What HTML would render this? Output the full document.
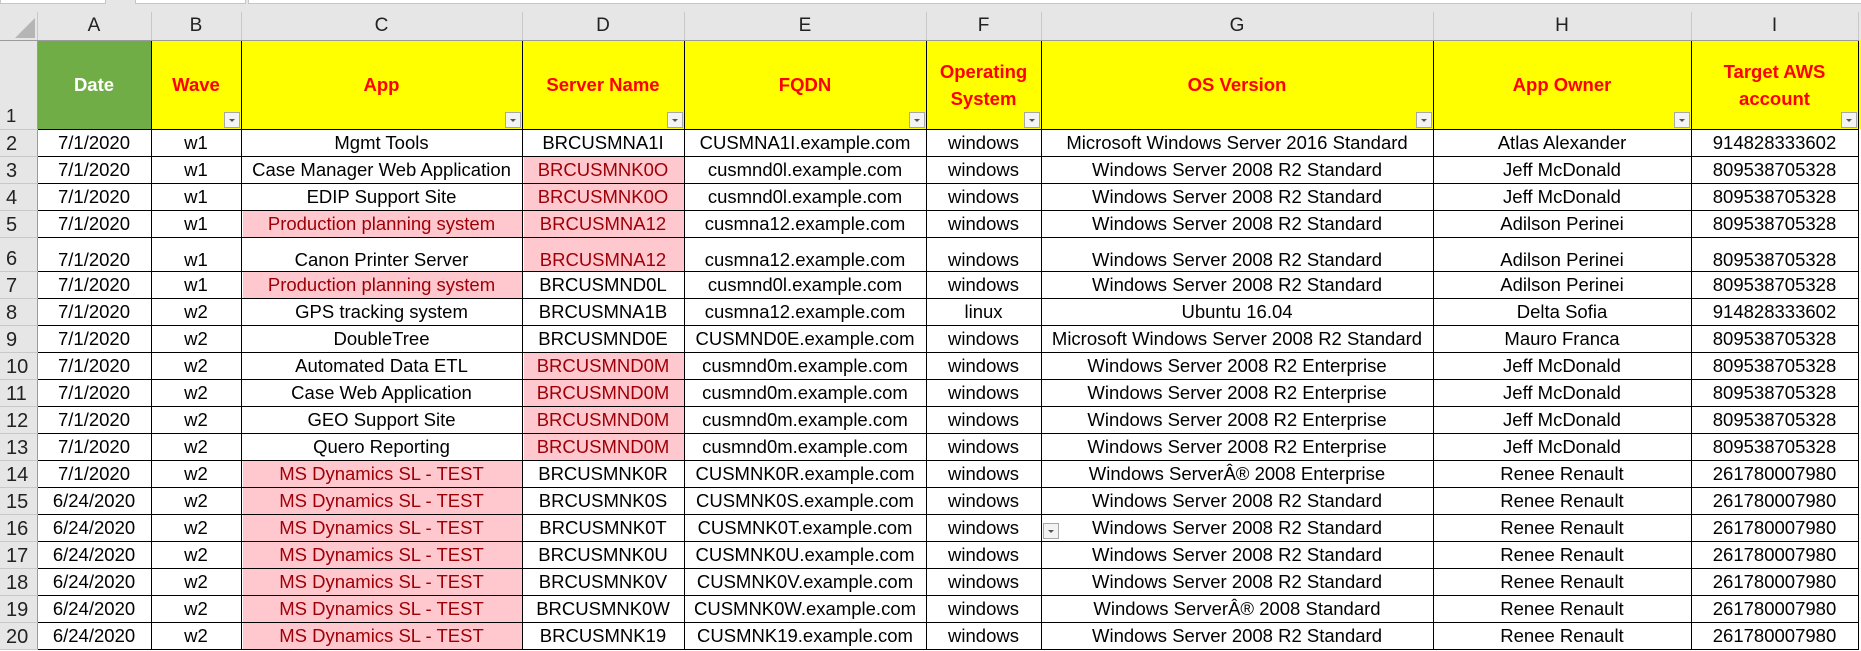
<!DOCTYPE html>
<html><head><meta charset="utf-8">
<style>
html,body{margin:0;padding:0;background:#fff;width:1861px;height:651px;overflow:hidden;font-family:"Liberation Sans",sans-serif;}
.top{position:absolute;left:0;top:0;width:1861px;height:12px;background:#e6e6e6;}
.top div{position:absolute;top:0;height:3px;background:#fff;border:1px solid #c6c6c6;border-top:none;}
table{position:absolute;left:0;top:12px;border-collapse:collapse;table-layout:fixed;font-size:18.5px;color:#000;}
td{padding:0;white-space:nowrap;overflow:hidden;text-align:center;border:1px solid #000;line-height:22px;position:relative;}
tr.ch td{background:#e6e6e6;border:none;border-right:1px solid #c8c8c8;border-bottom:1px solid #9b9b9b;color:#222;font-size:19px;vertical-align:bottom;padding-bottom:3px;}
td.rh{background:#e6e6e6;border:none;border-right:1px solid #9b9b9b;border-bottom:1px solid #c8c8c8;text-align:left;padding-left:6px;color:#222;font-size:20px;vertical-align:bottom;padding-bottom:1px;}
tr.h td{background:#ff0;color:#f00;font-weight:bold;font-size:18.5px;line-height:27px;}
tr.h td.g{background:#70ad47;color:#fff;}
tr.h td.rh{background:#e6e6e6;color:#222;font-weight:normal;padding-bottom:2px;line-height:22px;}
.p{background:#ffc7ce;color:#9c0006;box-shadow:inset 1px 0 #fff;}
.fb{position:absolute;right:1px;bottom:1px;width:14px;height:14px;background:#f3f3f3;border:1px solid #a8a8a8;}
.fb:after{content:"";position:absolute;left:4px;top:6px;border-left:3px solid transparent;border-right:3px solid transparent;border-top:3px solid #555;}
td.e{border:none;background:#fff;}
</style></head><body>
<div class="top"><div style="left:0;width:104px"></div><div style="left:135px;width:109px"></div><div style="left:248px;width:1613px"></div></div>
<table>
<colgroup><col style="width:37px"><col style="width:114px"><col style="width:90px"><col style="width:281px"><col style="width:162px"><col style="width:242px"><col style="width:115px"><col style="width:392px"><col style="width:258px"><col style="width:167px"><col style="width:3px"></colgroup>
<tr class="ch" style="height:28px"><td style="background:#e6e6e6;position:relative"><span style="position:absolute;right:2px;bottom:2px;width:0;height:0;border-left:20px solid transparent;border-bottom:20px solid #b5b5b5"></span></td><td>A</td><td>B</td><td>C</td><td>D</td><td>E</td><td>F</td><td>G</td><td>H</td><td>I</td><td style="border:none"></td></tr>
<tr class="h" style="height:89px"><td class="rh">1</td><td class="g">Date</td><td>Wave<span class="fb"></span></td><td>App<span class="fb"></span></td><td>Server Name<span class="fb"></span></td><td>FQDN<span class="fb"></span></td><td>Operating<br>System<span class="fb"></span></td><td>OS Version<span class="fb"></span></td><td>App Owner<span class="fb"></span></td><td>Target AWS<br>account<span class="fb"></span></td><td class="e"></td></tr>
<tr style="height:27px"><td class="rh">2</td><td>7/1/2020</td><td>w1</td><td>Mgmt Tools</td><td>BRCUSMNA1I</td><td>CUSMNA1I.example.com</td><td>windows</td><td>Microsoft Windows Server 2016 Standard</td><td>Atlas Alexander</td><td>914828333602</td><td class="e"></td></tr>
<tr style="height:27px"><td class="rh">3</td><td>7/1/2020</td><td>w1</td><td>Case Manager Web Application</td><td class="p">BRCUSMNK0O</td><td>cusmnd0l.example.com</td><td>windows</td><td>Windows Server 2008 R2 Standard</td><td>Jeff McDonald</td><td>809538705328</td><td class="e"></td></tr>
<tr style="height:27px"><td class="rh">4</td><td>7/1/2020</td><td>w1</td><td>EDIP Support Site</td><td class="p">BRCUSMNK0O</td><td>cusmnd0l.example.com</td><td>windows</td><td>Windows Server 2008 R2 Standard</td><td>Jeff McDonald</td><td>809538705328</td><td class="e"></td></tr>
<tr style="height:27px"><td class="rh">5</td><td>7/1/2020</td><td>w1</td><td class="p">Production planning system</td><td class="p">BRCUSMNA12</td><td>cusmna12.example.com</td><td>windows</td><td>Windows Server 2008 R2 Standard</td><td>Adilson Perinei</td><td>809538705328</td><td class="e"></td></tr>
<tr style="height:34px;vertical-align:bottom"><td class="rh">6</td><td>7/1/2020</td><td>w1</td><td>Canon Printer Server</td><td class="p">BRCUSMNA12</td><td>cusmna12.example.com</td><td>windows</td><td>Windows Server 2008 R2 Standard</td><td>Adilson Perinei</td><td>809538705328</td><td class="e"></td></tr>
<tr style="height:27px"><td class="rh">7</td><td>7/1/2020</td><td>w1</td><td class="p">Production planning system</td><td>BRCUSMND0L</td><td>cusmnd0l.example.com</td><td>windows</td><td>Windows Server 2008 R2 Standard</td><td>Adilson Perinei</td><td>809538705328</td><td class="e"></td></tr>
<tr style="height:27px"><td class="rh">8</td><td>7/1/2020</td><td>w2</td><td>GPS tracking system</td><td>BRCUSMNA1B</td><td>cusmna12.example.com</td><td>linux</td><td>Ubuntu 16.04</td><td>Delta Sofia</td><td>914828333602</td><td class="e"></td></tr>
<tr style="height:27px"><td class="rh">9</td><td>7/1/2020</td><td>w2</td><td>DoubleTree</td><td>BRCUSMND0E</td><td>CUSMND0E.example.com</td><td>windows</td><td>Microsoft Windows Server 2008 R2 Standard</td><td>Mauro Franca</td><td>809538705328</td><td class="e"></td></tr>
<tr style="height:27px"><td class="rh">10</td><td>7/1/2020</td><td>w2</td><td>Automated Data ETL</td><td class="p">BRCUSMND0M</td><td>cusmnd0m.example.com</td><td>windows</td><td>Windows Server 2008 R2 Enterprise</td><td>Jeff McDonald</td><td>809538705328</td><td class="e"></td></tr>
<tr style="height:27px"><td class="rh">11</td><td>7/1/2020</td><td>w2</td><td>Case Web Application</td><td class="p">BRCUSMND0M</td><td>cusmnd0m.example.com</td><td>windows</td><td>Windows Server 2008 R2 Enterprise</td><td>Jeff McDonald</td><td>809538705328</td><td class="e"></td></tr>
<tr style="height:27px"><td class="rh">12</td><td>7/1/2020</td><td>w2</td><td>GEO Support Site</td><td class="p">BRCUSMND0M</td><td>cusmnd0m.example.com</td><td>windows</td><td>Windows Server 2008 R2 Enterprise</td><td>Jeff McDonald</td><td>809538705328</td><td class="e"></td></tr>
<tr style="height:27px"><td class="rh">13</td><td>7/1/2020</td><td>w2</td><td>Quero Reporting</td><td class="p">BRCUSMND0M</td><td>cusmnd0m.example.com</td><td>windows</td><td>Windows Server 2008 R2 Enterprise</td><td>Jeff McDonald</td><td>809538705328</td><td class="e"></td></tr>
<tr style="height:27px"><td class="rh">14</td><td>7/1/2020</td><td>w2</td><td class="p">MS Dynamics SL - TEST</td><td>BRCUSMNK0R</td><td>CUSMNK0R.example.com</td><td>windows</td><td>Windows ServerÂ® 2008 Enterprise</td><td>Renee Renault</td><td>261780007980</td><td class="e"></td></tr>
<tr style="height:27px"><td class="rh">15</td><td>6/24/2020</td><td>w2</td><td class="p">MS Dynamics SL - TEST</td><td>BRCUSMNK0S</td><td>CUSMNK0S.example.com</td><td>windows</td><td>Windows Server 2008 R2 Standard</td><td>Renee Renault</td><td>261780007980</td><td class="e"></td></tr>
<tr style="height:27px"><td class="rh">16</td><td>6/24/2020</td><td>w2</td><td class="p">MS Dynamics SL - TEST</td><td>BRCUSMNK0T</td><td>CUSMNK0T.example.com</td><td>windows</td><td>Windows Server 2008 R2 Standard<span class="fb" style="left:1px;right:auto;bottom:2px"></span></td><td>Renee Renault</td><td>261780007980</td><td class="e"></td></tr>
<tr style="height:27px"><td class="rh">17</td><td>6/24/2020</td><td>w2</td><td class="p">MS Dynamics SL - TEST</td><td>BRCUSMNK0U</td><td>CUSMNK0U.example.com</td><td>windows</td><td>Windows Server 2008 R2 Standard</td><td>Renee Renault</td><td>261780007980</td><td class="e"></td></tr>
<tr style="height:27px"><td class="rh">18</td><td>6/24/2020</td><td>w2</td><td class="p">MS Dynamics SL - TEST</td><td>BRCUSMNK0V</td><td>CUSMNK0V.example.com</td><td>windows</td><td>Windows Server 2008 R2 Standard</td><td>Renee Renault</td><td>261780007980</td><td class="e"></td></tr>
<tr style="height:27px"><td class="rh">19</td><td>6/24/2020</td><td>w2</td><td class="p">MS Dynamics SL - TEST</td><td>BRCUSMNK0W</td><td>CUSMNK0W.example.com</td><td>windows</td><td>Windows ServerÂ® 2008 Standard</td><td>Renee Renault</td><td>261780007980</td><td class="e"></td></tr>
<tr style="height:27px"><td class="rh">20</td><td>6/24/2020</td><td>w2</td><td class="p">MS Dynamics SL - TEST</td><td>BRCUSMNK19</td><td>CUSMNK19.example.com</td><td>windows</td><td>Windows Server 2008 R2 Standard</td><td>Renee Renault</td><td>261780007980</td><td class="e"></td></tr>
</table>
</body></html>
